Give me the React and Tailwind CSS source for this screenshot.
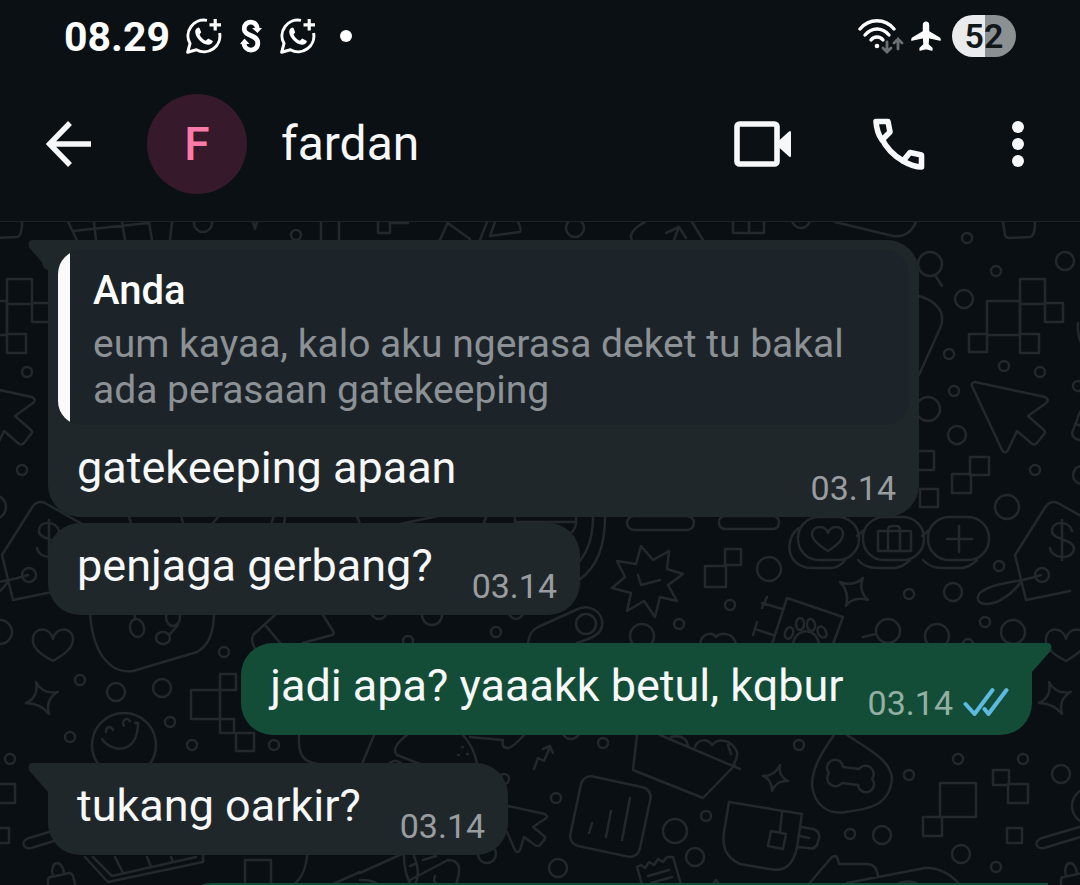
const messages = [
  {
    id: 1,
    text: "gatekeeping apaan",
    time: "03.14",
    tail: true,
    quote: {
      author: "Anda",
      text: "eum kayaa, kalo aku ngerasa deket tu bakal ada perasaan gatekeeping",
    },
  },
  { id: 2, text: "penjaga gerbang?", time: "03.14", grouped: true },
  { id: 3, text: "jadi apa? yaaakk betul, kqbur", time: "03.14", mine: true, tail: true },
  { id: 4, text: "tukang oarkir?", time: "03.14", tail: true },
];

// [cx, cy, r]
const bubbles = [
  [967, 238, 5], [1065, 261, 9], [996, 271, 5], [930, 264, 12], [964, 299, 9],
  [949, 354, 5], [1004, 366, 5], [1040, 372, 5], [954, 391, 5], [1078, 386, 5],
  [928, 409, 12], [957, 435, 9], [1035, 470, 5], [1007, 507, 12], [1082, 475, 9],
  [769, 569, 12], [730, 605, 5], [679, 624, 5], [642, 636, 12], [586, 624, 10],
  [999, 566, 5], [909, 594, 5], [953, 592, 9], [985, 622, 5], [1013, 632, 12],
  [937, 636, 12], [888, 631, 12], [968, 644, 5], [1042, 575, 7], [224, 652, 5],
  [80, 680, 5], [116, 692, 9], [162, 688, 9], [170, 722, 5], [70, 737, 5],
  [192, 745, 5], [274, 745, 5], [124, 745, 32], [799, 745, 5], [909, 775, 5],
  [958, 759, 5], [1023, 759, 5], [1061, 774, 9], [850, 834, 5], [882, 835, 9],
  [961, 854, 9], [996, 867, 5], [706, 816, 5], [695, 857, 9], [1090, 806, 18],
  [603, 743, 5], [556, 798, 5], [558, 868, 9], [675, 831, 12], [487, 854, 9],
  [504, 779, 5], [571, 730, 9], [203, 223, 9], [296, 235, 5], [801, 219, 9],
  [575, 228, 9], [432, 615, 10], [496, 632, 5], [408, 641, 5], [516, 612, 7],
  [379, 611, 8],
];

// [x, y, width, height]
const pixels = [
  [987, 301, 33, 34], [1020, 279, 25, 25], [1045, 303, 18, 19], [969, 334, 18, 18],
  [1020, 334, 19, 19], [914, 451, 20, 19], [920, 489, 18, 18], [970, 457, 19, 18],
  [952, 474, 19, 19], [705, 566, 21, 21], [725, 549, 16, 16], [191, 690, 29, 29],
  [220, 674, 16, 16], [220, 719, 14, 14], [236, 733, 18, 18], [1008, 784, 20, 19],
  [993, 770, 16, 15], [940, 783, 36, 34], [923, 817, 19, 19], [1007, 828, 15, 15],
  [245, 860, 26, 30], [321, 214, 18, 30], [378, 214, 12, 19], [733, 214, 31, 19],
];

const doodles = [
  // cursors
  "M1020 304V334M975 382L1045 397Q1050 400 1046 403L1028 416L1044 430Q1046 432 1044 434L1037 443Q1034 446 1031 443L1017 431L1008 450Q1005 455 1002 450L972 386Q971 382 975 382Z",
  "M480 800L545 814Q549 817 545 819L533 827L544 836Q546 838 544 840L540 845Q538 847 535 845L524 837L520 850Q517 854 515 850L507 832",
  // magnifier and rounded shapes behind the first bubble
  "M935 275L942 286M915 295C938 300 945 313 941 326L919 375M835 222L893 236Q909 238 916 222M1003 222L1005 235Q1006 238 1009 238L1030 237Q1035 236 1035 222M1078 323Q1077 335 1082 345M1083 408Q1079 412 1077 420L1072 433Q1072 439 1083 441M1076 424L1086 428",
  // coins
  "M799 528C784 538 785 568 813 568H832Q840 567 845 560M864 530L857 536M858 560C864 567 871 568 877 568H895Q903 567 910 560M929 530L922 536M923 560C929 567 936 568 942 568H962Q970 567 977 560",
  "M828 551C815 543 812 538 812 534C813 525 825 525 828 533C831 525 843 525 843 534C843 539 840 543 828 551Z",
  "M878 531H911V551H878ZM888 551V530Q888 526 892 526H896Q900 526 900 530V551M947 539H972M959 526V552",
  // price tag
  "M1070 591L1026 600L1015 555L1046 506Q1051 500 1058 503L1095 524M1041 575C1020 583 990 582 979 594C972 608 1000 610 1021 582M1072 531C1070 521 1053 520 1052 530C1051 541 1074 538 1074 549C1073 560 1052 560 1050 548M1062 520V560",
  // burst
  "M641 546L653 560L669 551L667 569L683 574L668 585L677 601L660 597L655 617L644 601L627 611L631 593L612 588L625 577L617 561L636 564ZM638 575L641 585L660 580",
  // sparkles
  "M840 582Q854 587 863 578Q858 591 868 600Q853 596 846 606Q850 592 840 582Z",
  "M1049 682Q1056 695 1071 692Q1058 699 1062 714Q1053 703 1039 703Q1052 697 1049 682Z",
  "M780 765Q778 776 788 781Q776 780 772 791Q772 779 763 776Q775 776 780 765Z",
  // paw card
  "M772 644L787 598L843 617L833 644M762 603L782 609M767 597L762 608M755 629L773 635M757 622L753 635M863 637L876 634M793 644C796 627 816 627 819 644M700 644C702 632 713 632 716 637C720 632 733 632 736 644",
  "M528 643C529 634 532 630 538 627L578 609C594 602 608 618 600 631C596 637 586 640 577 643",
  "M605 517Q605 562 579 580M593 517Q593 545 579 562M576 517Q577 527 572 532M515 517V522H576M484 523L486 517M400 524L438 516M357 516L360 524M271 524L274 516M285 516L284 524M212 524L219 516M181 516L183 523M129 516L131 524",
  // hearts
  "M1066 661C1048 652 1045 644 1046 638C1048 626 1063 627 1066 639C1069 626 1085 627 1086 638C1086 646 1083 651 1066 661Z",
  // dog face
  "M90 612C92 650 108 674 133 671L197 652Q214 643 214 612M134 610L135 619M178 625L170 634M332 625",
  "M275 615L254 634Q249 640 257 652M323 615L333 631Q335 634 332 635L303 643M266 626L281 644",
  // smiley
  "M102 739C110 752 137 756 138 724Q139 722 135 723M106 732C106 727 110 725 113 730M124 726C121 720 127 717 130 721M299 735C298 755 303 762 318 764",
  // bone
  "M834 735C822 752 812 768 812 785C814 805 828 815 846 812C870 809 890 805 892 778C890 760 870 750 847 735",
  "M843 767L859 769A8 8 0 1 1 872 779A8 8 0 1 1 858 785L842 783A8 8 0 1 1 829 773A8 8 0 1 1 843 767Z",
  // cup
  "M729 802L802 814L797 847C793 867 783 872 769 869L740 864C725 857 722 846 724 832ZM782 812L780 831M771 831L786 834L783 849L768 846ZM800 827L813 829Q820 831 819 838L817 845Q814 850 808 848L798 847M800 836L809 838",
  "M808 885L831 858Q836 853 838 860L839 864H868Q877 865 878 877M847 883L925 868Q945 867 960 885M895 885Q908 878 920 885",
  // envelope
  "M637 735L633 770L703 798L735 765M660 735L740 769M671 737Q685 734 688 745M695 747C698 739 707 738 712 745C719 737 732 740 737 752Q738 758 733 765M728 745L731 754",
  "M589 833L592 823M606 837L611 811M622 840L630 798M534 769L538 758L544 761L550 747M543 749L550 746L553 753",
  // burger
  "M362 764L374 735M407 735Q390 748 397 755L420 764M463 735Q474 747 477 764M390 763Q396 758 402 764M470 737L503 740Q501 748 508 748Q512 748 524 735M458 755h1M467 754h1M462 747h1",
  "M637 867L641 865L645 868L649 862L654 865L658 859L663 862L667 857L673 857L682 888M637 867L643 888M648 876L669 870M651 883L672 877M712 885L716 880L720 885",
  "M360 873L402 854M404 856Q404 873 411 885M414 856Q421 873 415 885M410 866L415 864M423 860L436 856M410 880L448 860Q465 860 456 884M435 876Q432 885 440 884M360 880Q375 880 378 885",
  // brush, basket, bag
  "M1110 818L1042 838C1033 841 1036 850 1044 848L1110 828M85 857L108 882L203 862V855M93 857L112 876L196 857M115 857L123 873M147 857L151 867M171 857L173 862M307 856Q306 873 295 884M333 884L360 872",
  "M1061 888V880Q1061 877 1064 877L1082 873Q1085 873 1086 876L1089 888M1066 876C1062 861 1075 858 1077 873",
  // frames along the top edge
  "M68 222L77 240M73 231L148 223M94 222L96 240M122 222L125 240M149 222L152 240M172 222L170 240M253 222L255 229L257 222M390 223H408M440 240L448 222M449 224L470 239M487 222L480 240M495 222L490 236L520 232Q522 231 518 222M645 222Q627 232 632 240M666 233L679 227L686 238M679 227L674 240M692 222L703 240M749 222V233",
];

function Wallpaper() {
  return (
    <svg
      className="absolute inset-0 w-full h-full"
      viewBox="0 222 1080 663"
      preserveAspectRatio="xMidYMin slice"
      fill="none"
      stroke="#22282c"
      strokeWidth="2.5"
      strokeLinecap="round"
      strokeLinejoin="round"
      aria-hidden="true"
    >
      <g id="doodles">
        {bubbles.map(([cx, cy, r]) => (
          <circle key={`${cx}-${cy}`} cx={cx} cy={cy} r={r} />
        ))}
        {pixels.map(([x, y, w, h]) => (
          <rect key={`${x}-${y}`} x={x} y={y} width={w} height={h} />
        ))}
        {doodles.map((d) => (
          <path key={d} d={d} />
        ))}
        {[798, 863, 928].map((x) => (
          <rect key={x} x={x} y="517" width="61" height="43" rx="21" />
        ))}
        <rect x="627" y="516" width="67" height="14" rx="7" />
        <rect x="719" y="516" width="60" height="13" rx="6" />
        <rect x="575" y="781" width="71" height="71" rx="10" transform="rotate(12 610 816)" />
        <ellipse cx="137" cy="628" rx="7" ry="9" transform="rotate(-15 137 628)" />
        <ellipse cx="163" cy="638" rx="7" ry="6" />
        <ellipse cx="173" cy="617" rx="7" ry="9" />
        <ellipse cx="789" cy="633" rx="4" ry="6" transform="rotate(20 789 633)" />
        <ellipse cx="800" cy="624" rx="4" ry="6" />
        <ellipse cx="811" cy="625" rx="4" ry="6" transform="rotate(-10 811 625)" />
        <ellipse cx="822" cy="632" rx="4" ry="6" transform="rotate(-30 822 632)" />
      </g>
      {/* The pattern repeats every 1013 units */}
      <use href="#doodles" x="-1013" />
    </svg>
  );
}

function ChatPlusIcon() {
  return (
    <svg className="w-9 h-9" viewBox="0 0 36 36" fill="none" stroke="#fff" aria-hidden="true">
      <path
        d="M21 2.4A15.8 15.8 0 0 0 4 25.6L1.7 34.2L10.4 31.8A15.8 15.8 0 0 0 33.6 15"
        strokeWidth="3"
        strokeLinejoin="round"
      />
      <path d="M29.2 1V12.5M23.5 6.8H35" strokeWidth="3.2" />
      <path
        d="M12.6 9.6C11 9.8 9.2 11.4 9.2 13.8C9.4 19.5 16 26.6 22 26.8C24.6 26.8 26.7 25.2 26.9 22.9L22.2 20.4L19.8 22.8C17.2 21.8 14.6 19.2 13.6 16.6L15.2 14.2L13.5 10Z"
        fill="#fff"
        stroke="none"
      />
    </svg>
  );
}

function SwapIcon() {
  return (
    <svg className="w-[22px] h-[34px]" viewBox="0 0 22 34" fill="none" stroke="#fff" aria-hidden="true">
      <path
        d="M17.5 10.5C17.5 0.5 4 1 4.2 10C4.4 18 17.8 15 17.8 24C17.8 33.5 4 33.5 4 23.5"
        strokeWidth="4.8"
      />
      <path d="M12 9H22L17.5 14ZM0 25L4.5 19.5L9.5 25Z" fill="#fff" stroke="none" />
    </svg>
  );
}

function WifiIcon() {
  return (
    <svg
      className="w-[46px] h-9"
      viewBox="0 0 46 36"
      fill="none"
      stroke="#fff"
      strokeWidth="3.4"
      strokeLinecap="round"
      aria-hidden="true"
    >
      <path d="M2 11C11 0 27 0 36 11" />
      <path d="M7 17C14 9 24 9 31 17" />
      <path d="M13 22C16 18 22 18 25 22" />
      <circle cx="19" cy="28" r="2.3" fill="#fff" stroke="none" />
      <path
        d="M29 24V33M25 30L29 34L33 30M40 31V21M36 25L40 21L44 25"
        stroke="#6b7072"
        strokeWidth="2.8"
      />
    </svg>
  );
}

function AirplaneIcon() {
  return (
    <svg
      className="w-[30px] h-[30px] mx-[7px]"
      viewBox="0 0 30 30"
      fill="#fff"
      stroke="#fff"
      strokeWidth="1.2"
      strokeLinejoin="round"
      aria-hidden="true"
    >
      <path d="M15 1C13.4 1 12.4 2.3 12.4 4V10.5L1.5 17Q.8 17.6 .8 19.2L12.4 16.6L13 23.5L9 27.2V29.2L15 27.6L21 29.2V27.2L17 23.5L17.6 16.600L29.2 19.2Q29.2 17.6 28.5 17L17.6 10.5V4C17.6 2.3 16.6 1 15 1Z" />
    </svg>
  );
}

function StatusBar() {
  return (
    <div className="flex items-center justify-between h-[72px] px-16">
      <div className="flex items-center">
        <span className="pt-0.5 text-[41px] leading-10 font-bold text-white">08.29</span>
        <div className="flex items-center gap-[18px] ml-4">
          <ChatPlusIcon />
          <SwapIcon />
          <ChatPlusIcon />
        </div>
        <span className="w-3 h-3 ml-6 rounded-full bg-white"></span>
      </div>
      <div className="flex items-center">
        <WifiIcon />
        <AirplaneIcon />
        <div className="flex items-center justify-center w-16 h-[42px] ml-1 rounded-full bg-linear-to-r from-[#e9ebec] from-52% to-[#8b9092] to-52%">
          <span className="text-[34px] leading-10 font-semibold text-[#12171a]">52</span>
        </div>
      </div>
    </div>
  );
}

function ChatHeader() {
  return (
    <header className="flex items-center pt-[22px] pb-[27px] pl-[46px] pr-14 border-b border-[#1f2427] text-[#f7f8fa]">
      <button type="button" aria-label="Kembali">
        <svg className="w-[46px] h-[46px]" viewBox="0 0 46 46" fill="none" stroke="currentColor" strokeWidth="5.5">
          <path d="M45 23H4M24 2L3.5 23L24 44" />
        </svg>
      </button>
      <div className="flex items-center justify-center w-[100px] h-[100px] ml-[55px] rounded-full bg-[#36192b]">
        <span className="text-[46px] leading-none font-medium text-[#fb7ba8]">F</span>
      </div>
      <h1 className="flex-1 ml-[34px] text-[48px] leading-14">fardan</h1>
      <button type="button" aria-label="Panggilan video">
        <svg className="w-[58px] h-[46px]" viewBox="0 0 58 46" fill="none" stroke="currentColor">
          <rect x="3" y="3" width="40" height="40" rx="2.5" strokeWidth="5.6" />
          <path
            d="M44.5 20L55 10.5Q57 9 57 11.5V34.5Q57 37 55 35.5L44.5 26Z"
            fill="currentColor"
            stroke="none"
          />
        </svg>
      </button>
      <button type="button" aria-label="Panggilan suara" className="ml-20">
        <svg
          className="w-[54px] h-[54px]"
          viewBox="0 0 54 54"
          fill="none"
          stroke="currentColor"
          strokeWidth="5.6"
          strokeLinejoin="round"
        >
          <path d="M4 4.5H16L18 15L10 23C6.500 18 4.500 12 4 4.5Z" />
          <path d="M9 20C14 31 21 38.5 32 44.5" />
          <path d="M31 44L38 35.5L49.5 38V50C43 50 37 47.5 31 44Z" />
        </svg>
      </button>
      <button type="button" aria-label="Opsi lainnya" className="ml-[86px]">
        <svg className="w-3 h-[46px]" viewBox="0 0 12 46" fill="currentColor">
          <circle cx="6" cy="6" r="6" />
          <circle cx="6" cy="23" r="6" />
          <circle cx="6" cy="40" r="6" />
        </svg>
      </button>
    </header>
  );
}

function Tail({ mine }) {
  return (
    <svg
      className={
        mine
          ? "absolute top-0 left-full w-5 h-8 -scale-x-100 text-[#144d37]"
          : "absolute top-0 right-full w-5 h-8 text-[#20272a]"
      }
      viewBox="0 0 20 32"
      fill="currentColor"
      aria-hidden="true"
    >
      <path d="M20 0H4C1 0 -.5 4 1.5 8L20 29Z" />
    </svg>
  );
}

function ReadTicks() {
  return (
    <svg
      className="w-[46px] h-[30px] ml-[10px] mb-1.5"
      viewBox="0 0 46 30"
      fill="none"
      stroke="#5cb9e0"
      strokeWidth="4"
      strokeLinecap="round"
      strokeLinejoin="round"
      role="img"
      aria-label="Dibaca"
    >
      <path d="M2.5 17L11.5 27L29.5 3M21.5 22L25.5 27L43.5 3" />
    </svg>
  );
}

function Quote({ author, text }) {
  return (
    <blockquote className="flex mx-[10px] mt-[10px] rounded-[24px] overflow-hidden bg-[#1d2429]">
      <div className="w-3 bg-[#fafafa]"></div>
      <div className="flex-1 pt-[18px] pb-3 pl-[23px] pr-4">
        <p className="text-[40px] leading-[46px] font-medium text-white">{author}</p>
        <p className="mt-[7px] text-[39px] leading-[46px] text-[#8b9195]">{text}</p>
      </div>
    </blockquote>
  );
}

function Message({ text, time, mine, tail, grouped, quote }) {
  return (
    <li className={`flex ${mine ? "justify-end" : "justify-start"} ${grouped ? "mt-1.5" : "mt-7 first:mt-0"}`}>
      <article
        className={`relative rounded-[32px] ${mine ? "bg-[#144d37]" : "bg-[#20272a]"} ${
          tail ? (mine ? "rounded-tr-none" : "rounded-tl-none") : ""
        } ${quote ? "w-full max-w-[871px]" : ""}`}
      >
        {tail && <Tail mine={mine} />}
        {quote && <Quote {...quote} />}
        <div className="flex justify-between pt-4 pb-2 pl-[29px] pr-[23px]">
          <p className="pb-[14px] text-[45px] leading-[54px] text-[#f7f8fa]">{text}</p>
          <div className={`flex items-end ${mine ? "ml-6 pb-1" : "ml-[39px] pb-px"}`}>
            <time className={`text-[34px] leading-10 ${mine ? "text-[#94b0a4]" : "text-[#999da0]"}`}>{time}</time>
            {mine && <ReadTicks />}
          </div>
        </div>
      </article>
    </li>
  );
}

export default function App() {
  return (
    <div className="flex flex-col h-screen overflow-hidden bg-[#0b1014] font-['Roboto',sans-serif]">
      <StatusBar />
      <ChatHeader />
      <main className="relative flex-1 overflow-hidden bg-[#0a0f13]">
        <Wallpaper />
        <ul className="relative px-12 pt-[18px]">
          {messages.map((message) => (
            <Message key={message.id} {...message} />
          ))}
        </ul>
        {/* Top edge of the next sent message */}
        <div className="relative h-24 mt-7 ml-[180px] mr-8 rounded-[32px] rounded-tr-none bg-[#144d37]"></div>
      </main>
    </div>
  );
}
